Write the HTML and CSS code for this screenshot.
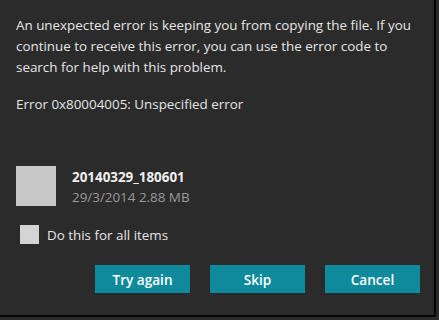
FILE: index.html
```html
<!DOCTYPE html>
<html>
<head>
<meta charset="utf-8">
<link rel="stylesheet" href="styles.css">
</head>
<body>
<div class="dialog">
  <p class="msg">An unexpected error is keeping you from copying the file. If you continue to receive this error, you can use the error code to search for help with this problem.</p>
  <p class="code">Error 0x80004005: Unspecified error</p>
  <div class="file">
    <div class="thumb"></div>
    <div class="info">
      <div class="name">20140329_180601</div>
      <div class="meta">29/3/2014 2.88 MB</div>
    </div>
  </div>
  <label class="check"><span class="box"></span><span>Do this for all items</span></label>
  <div class="buttons">
    <button class="btn">Try again</button>
    <button class="btn">Skip</button>
    <button class="btn">Cancel</button>
  </div>
</div>
</body>
</html>
```
FILE: styles.css
```css
html, body {
  margin: 0;
  padding: 0;
  background: #2b2b2b;
}
body {
  font-family: "Open Sans", "Noto Sans", sans-serif;
  color: #e6e6e6;
}
.dialog {
  width: 436px;
  height: 317px;
  box-sizing: border-box;
  background: #2b2b2b;
  border-right: 2px solid #050505;
  border-bottom: 2px solid #050505;
  padding: 15px 14px 0 16px;
  display: flex;
  flex-direction: column;
}
.msg {
  margin: 0;
  font-size: 13.4px;
  line-height: 21px;
}
.code {
  margin: 16px 0 0;
  font-size: 13.4px;
  line-height: 21px;
}
.file {
  display: flex;
  align-items: flex-start;
  gap: 16px;
  margin-top: 51px;
}
.thumb {
  width: 40px;
  height: 40px;
  background: #c8c8c8;
}
.info {
  display: flex;
  flex-direction: column;
  margin-top: 1px;
}
.name {
  font-weight: 700;
  font-size: 13.4px;
  line-height: 20px;
  color: #f0f0f0;
}
.meta {
  font-size: 13.4px;
  line-height: 20px;
  color: #9a9a9a;
}
.check {
  display: flex;
  align-items: center;
  gap: 8px;
  margin-top: 18px;
  margin-left: 4px;
  font-size: 13.4px;
}
.box {
  width: 19px;
  height: 19px;
  background: #d4d4d4;
}
.buttons {
  display: flex;
  justify-content: flex-end;
  gap: 20px;
  margin-top: 21px;
}
.btn {
  width: 95px;
  height: 28px;
  border: 0;
  padding: 0;
  background: #0e8a9c;
  color: #ffffff;
  font-family: "Open Sans", "Noto Sans", sans-serif;
  font-weight: 600;
  font-size: 13.6px;
}
```
